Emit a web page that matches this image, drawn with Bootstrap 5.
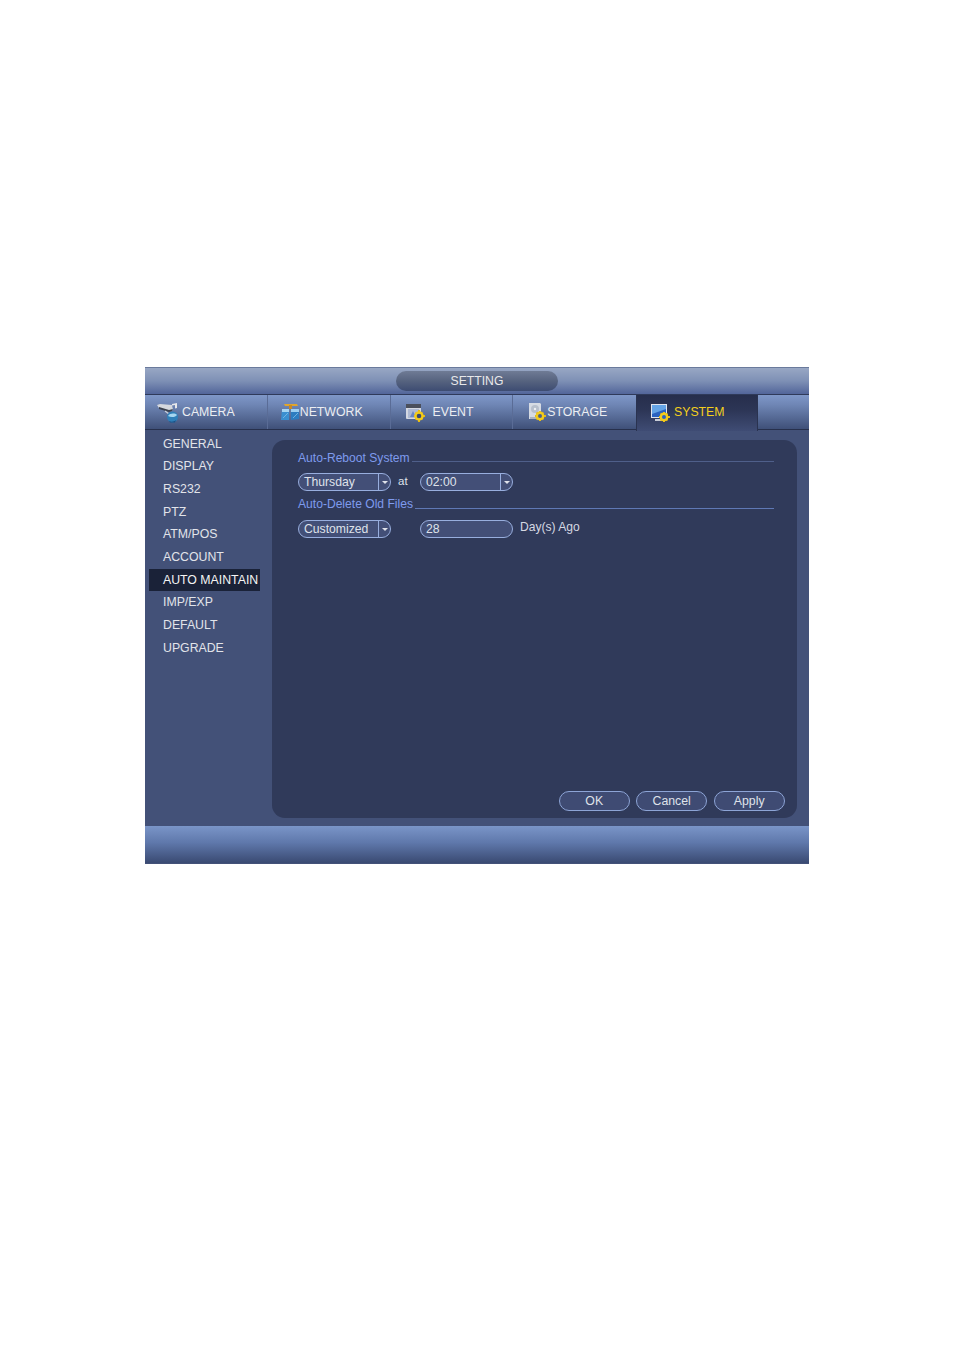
<!DOCTYPE html>
<html lang="en">
<head>
<meta charset="utf-8">
<title>SETTING</title>
<link href="https://cdn.jsdelivr.net/npm/bootstrap@5.3.0/dist/css/bootstrap.min.css" rel="stylesheet">
<style>
body{background:#fff;font-family:"Liberation Sans",Arial,sans-serif;font-size:12.3px;color:#e2e4ea;}
.page-wrap{padding:367px 0 0 145px;}
.dvr-window{width:664px;height:497px;background:#435178;}
.title-bar{height:28px;background:linear-gradient(#98a7c4,#7e90b5 50%,#52659a);border-top:1px solid #6a7a9c;border-bottom:1px solid #2f3a5a;}
.title-pill{width:162px;height:20px;border-radius:10px;background:linear-gradient(#6f7b95,#56637f 50%,#3d4c72);text-align:center;line-height:20px;color:#e8e8ea;font-size:12.2px;}
.tab-row{height:35px;background:linear-gradient(#7f97c8,#6e85b4 30%,#3f5078);border-bottom:1px solid #27304c;}
.tab-cell{width:122.75px;height:100%;line-height:1;position:relative;border-right:1px solid #5a6c96;color:#eceef2;font-size:12.3px;}
.tab-cell:nth-child(4){border-right:0;}
.tab-cell.tab-on{width:122px;background:linear-gradient(#262e4c,#2c3555 40%,#3f4c74);color:#f3cf1d;border-right:1px solid #2a3350;border-left:1px solid #2a3350;height:36px;padding-bottom:1px;z-index:1;}
.tab-end{flex:1;}
.side-col{width:127px;padding:2.7px 0 0 4px;}
.side-item{height:22.67px;line-height:22px;width:111px;padding-left:14px;color:#e2e4ea;white-space:nowrap;}
.side-item.side-on{background:#1a2238;color:#f4f4f4;}
.main-area{height:396px;}
.panel-box{width:525px;height:378px;margin-top:10px;background:#303a5a;border-radius:13px;}
.panel-inner{padding:11px 23px 0 26px;}
.sec-head{height:14px;line-height:14px;color:#7f9bee;font-size:12.1px;}
.sec-a{margin-bottom:8px;}
.sec-b{margin-bottom:9px;}
.sec-line{flex:1;height:1px;margin-left:2px;}
.sec-a .sec-line{background:#4f5f8a;margin-top:10px;}
.sec-b .sec-line{background:#5f78b4;margin-top:11px;}
.ctl-row{height:18px;margin-bottom:6px;line-height:18px;}
.sel-box{height:18px;width:93px;border:1px solid #98aede;border-radius:9px;background:#434f77;padding-left:5px;line-height:16px;color:#dfe2ea;font-size:12.2px;}
.sel-arrow{width:12px;margin-left:auto;border-left:1px solid #98aede;height:100%;}
.sel-tri{width:0;height:0;border-left:3.5px solid transparent;border-right:3.5px solid transparent;border-top:3.5px solid #dfe2ea;}
.at-label{width:29px;padding-left:7px;font-size:11.5px;line-height:16px;color:#dfe2ea;}
.gap-cell{width:29px;}
.days-label{margin-left:7px;line-height:15px;color:#d5d8e2;font-size:12.1px;}
.btn-row{padding:0 12.3px 7px 0;gap:6.5px;}
.btn.dvr-btn{width:71px;height:20px;padding:0;border:1.5px solid #8da4d6;border-radius:10px;background:#3f4b73;color:#dfe2ea;font-size:12.3px;line-height:17px;}
.bottom-bar{height:37px;background:linear-gradient(#7a95c8,#5f78ab 45%,#3a4a72);}
.tab-icon{flex:none;}
</style>
</head>
<body>
<div class="page-wrap">
<div class="dvr-window d-flex flex-column">
  <div class="title-bar d-flex justify-content-center align-items-center">
    <div class="title-pill">SETTING</div>
  </div>
  <div class="tab-row d-flex">
    <div class="tab-cell d-flex align-items-center" style="padding-left:11px">
      <svg class="tab-icon" width="23" height="21" viewBox="0 0 23 21"><path d="M1 3l3-1 12 1 1 5-4 1L3 6z" fill="#d5d8de"/><path d="M3 5l10 3 4-1-1 2-3 1L3 7z" fill="#3c424e"/><path d="M16 2l5-1v5l-2 .5V3l-3 .5z" fill="#e8e8ea"/><path d="M9 9l4 3" stroke="#cdd2da" stroke-width="1.200"/><circle cx="16.500" cy="15" r="5.500" fill="#2f7fb8"/><path d="M12 14c2-3 7-3 9-1-1 2-6 3-9 1z" fill="#a6d6f0"/><path d="M13 19c2 1 5 1 7-1l-1 2.500h-5z" fill="#1c4f82"/></svg>
      <span style="padding-left:3px">CAMERA</span>
    </div>
    <div class="tab-cell d-flex align-items-center" style="padding-left:12px">
      <svg class="tab-icon" width="20" height="18" viewBox="0 0 20 18"><path d="M4 1h13l1 2H5z" fill="#e0a52c"/><rect x="9" y="2" width="3" height="4" fill="#c98a22"/><path d="M2 6h7v11H1z" fill="#3a8fd0"/><path d="M2 6h7v3H2z" fill="#a7d6f2"/><path d="M11 6h8v10l-8 1z" fill="#2c7cc0"/><path d="M11 6h8v3h-8z" fill="#9ccff0"/><path d="M3 15l5-5M13 15l5-5" stroke="#7fbce6" stroke-width=".8"/></svg>
      <span>NETWORK</span>
    </div>
    <div class="tab-cell d-flex align-items-center" style="padding-left:14px">
      <svg class="tab-icon" width="21" height="19" viewBox="0 0 21 19"><rect x="1" y="1" width="15" height="15" rx="1" fill="#d4d8e2"/><rect x="1" y="1" width="15" height="4" fill="#4a4f5c"/><rect x="3" y="6" width="11" height="9" fill="#aeb9d2"/><path d="M5 14l3-6 3 6z" fill="#6a86c6"/><path d="M14 7v2M14 17v2M9 13h2M17 13h3M10.500 9.500l1.500 1.500M17.500 16.500l-1.500-1.500M17.500 9.500l-1.500 1.500M10.500 16.500l1.500-1.500" stroke="#e8b90f" stroke-width="2"/><circle cx="14" cy="13" r="3.500" fill="#3d4a6e" stroke="#f2cb1c" stroke-width="2.400"/></svg>
      <span style="padding-left:7px">EVENT</span>
    </div>
    <div class="tab-cell d-flex align-items-center" style="padding-left:15px">
      <svg class="tab-icon" width="18" height="20" viewBox="0 0 18 20"><path d="M1 1h11l1 1v15H1z" fill="#d6dbe3"/><circle cx="7" cy="7" r="4" fill="#b7bfcc"/><circle cx="7" cy="7" r="1.200" fill="#eef0f4"/><rect x="2" y="15" width="6" height="2" fill="#aab2c0"/><path d="M12 9v2M12 17v2M7 14h2M15 14h3M8.500 10.500l1.500 1.500M15.500 17.500l-1.500-1.500M15.500 10.500l-1.500 1.500M8.500 17.500l1.500-1.500" stroke="#e8b90f" stroke-width="2"/><circle cx="12" cy="14" r="3.200" fill="#4d5f8a" stroke="#f2cb1c" stroke-width="2.400"/></svg>
      <span style="padding-left:1px">STORAGE</span>
    </div>
    <div class="tab-cell tab-on d-flex align-items-center" style="padding-left:13px">
      <svg class="tab-icon" width="20" height="20" viewBox="0 0 20 20"><path d="M1 1h16v14H1z" fill="#dfe4ee"/><rect x="2" y="2" width="14" height="12" fill="#2a62c0"/><path d="M2 2h14v4L2 11z" fill="#64a4e6"/><rect x="5" y="16" width="8" height="2" fill="#c8ccd6"/><path d="M14 9v2M14 17v2M9 14h2M17 14h3M10.500 10.500l1.500 1.500M17.500 17.500l-1.500-1.500M17.500 10.500l-1.500 1.500M10.500 17.500l1.500-1.500" stroke="#e8b90f" stroke-width="2"/><circle cx="14" cy="14" r="3.200" fill="#2a62c0" stroke="#f2cb1c" stroke-width="2.400"/></svg>
      <span style="padding-left:4px">SYSTEM</span>
    </div>
    <div class="tab-end"></div>
  </div>
  <div class="main-area d-flex">
    <div class="side-col">
      <div class="side-item">GENERAL</div>
      <div class="side-item">DISPLAY</div>
      <div class="side-item">RS232</div>
      <div class="side-item">PTZ</div>
      <div class="side-item">ATM/POS</div>
      <div class="side-item">ACCOUNT</div>
      <div class="side-item side-on">AUTO MAINTAIN</div>
      <div class="side-item">IMP/EXP</div>
      <div class="side-item">DEFAULT</div>
      <div class="side-item">UPGRADE</div>
    </div>
    <div class="panel-box d-flex flex-column">
      <div class="panel-inner">
        <div class="sec-head sec-a d-flex"><span>Auto-Reboot System</span><div class="sec-line"></div></div>
        <div class="ctl-row d-flex">
          <div class="sel-box d-flex"><span>Thursday</span><div class="sel-arrow d-flex justify-content-center align-items-center"><div class="sel-tri"></div></div></div>
          <div class="at-label">at</div>
          <div class="sel-box d-flex"><span>02:00</span><div class="sel-arrow d-flex justify-content-center align-items-center"><div class="sel-tri"></div></div></div>
        </div>
        <div class="sec-head sec-b d-flex"><span>Auto-Delete Old Files</span><div class="sec-line"></div></div>
        <div class="ctl-row d-flex">
          <div class="sel-box d-flex"><span>Customized</span><div class="sel-arrow d-flex justify-content-center align-items-center"><div class="sel-tri"></div></div></div>
          <div class="gap-cell"></div>
          <div class="sel-box d-flex"><span>28</span></div>
          <div class="days-label">Day(s) Ago</div>
        </div>
      </div>
      <div class="btn-row d-flex justify-content-end mt-auto">
        <button type="button" class="btn dvr-btn">OK</button>
        <button type="button" class="btn dvr-btn">Cancel</button>
        <button type="button" class="btn dvr-btn">Apply</button>
      </div>
    </div>
  </div>
  <div class="bottom-bar"></div>
</div>
</div>
<script src="https://cdn.jsdelivr.net/npm/bootstrap@5.3.0/dist/js/bootstrap.bundle.min.js"></script>
</body>
</html>
